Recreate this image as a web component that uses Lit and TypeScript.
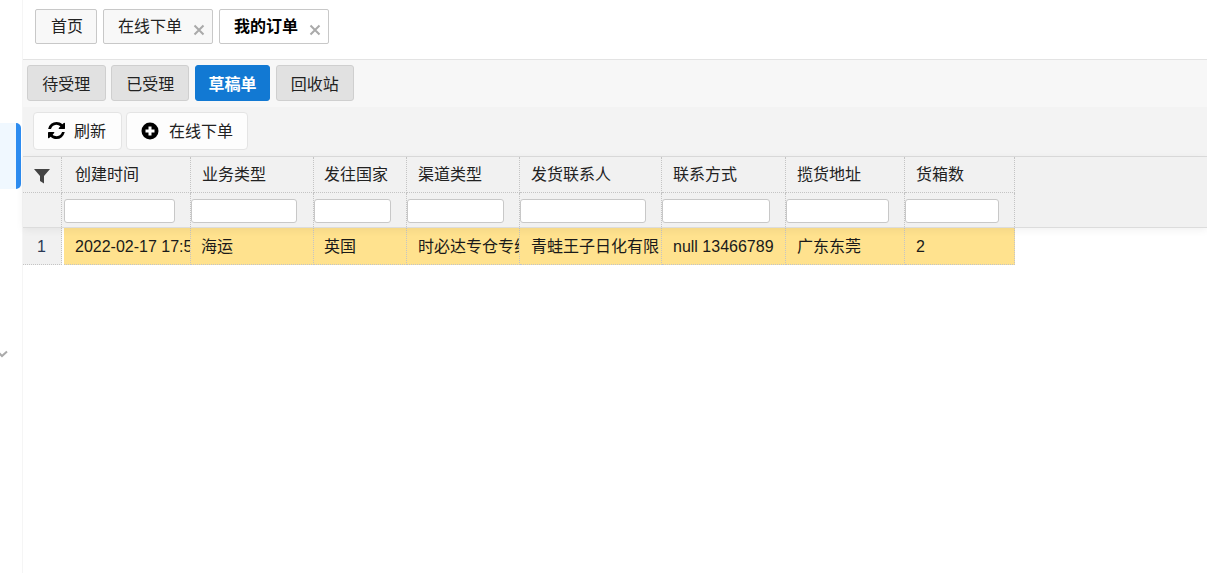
import { LitElement, html, css } from "lit";
import { customElement } from "lit/decorators.js";

const COLS = [
  { t: "创建时间", v: "2022-02-17 17:58", w: 111 },
  { t: "业务类型", v: "海运", w: 106 },
  { t: "发往国家", v: "英国", w: 77 },
  { t: "渠道类型", v: "时必达专仓专线", w: 97 },
  { t: "发货联系人", v: "青蛙王子日化有限", w: 126 },
  { t: "联系方式", v: "null 13466789", w: 108 },
  { t: "揽货地址", v: "广东东莞", w: 103 },
  { t: "货箱数", v: "2", w: 94 },
];

@customElement("app-root")
export class AppRoot extends LitElement {
  static styles = css`
    :host {
      display: block;
      width: 1207px;
      height: 573px;
      overflow: hidden;
      background: #fff;
      color: #111;
      font: 16px/20px "Liberation Sans", "Noto Sans CJK SC", sans-serif;
    }
    .page { display: flex; height: 573px; }
    .side {
      width: 22px;
      flex: none;
      box-sizing: content-box;
      border-right: 1px solid #f5f5f5;
      padding-top: 123px;
    }
    .side-item {
      height: 66px;
      width: 21px;
      box-sizing: border-box;
      background: #f0f8ff;
      border-right: 5px solid #2d8cf0;
      border-radius: 0 5px 5px 0;
    }
    .chev { display: block; margin: 161px 0 0 -3px; }
    .main { flex: 1; min-width: 0; }
    .tabs {
      height: 59px;
      box-sizing: border-box;
      padding: 9px 0 0 12px;
      display: flex;
      gap: 6px;
    }
    .tab {
      height: 35px;
      box-sizing: border-box;
      border: 1px solid #c8c8c8;
      border-radius: 2px;
      background: #f8f8f8;
      display: flex;
      align-items: center;
      padding: 1px 0 0 14px;
      color: #222;
    }
    .tab.home { width: 62px; padding-left: 15px; }
    .tab.closable { width: 110px; }
    .tab.active { background: #fff; font-weight: 700; color: #000; }
    .x { margin: 5px 0 0 11px; flex: none; }
    .sub {
      height: 48px;
      box-sizing: border-box;
      border-top: 1px solid #e3e3e3;
      background: #f7f7f7;
      padding: 5px 0 0 4px;
      display: flex;
      gap: 5.7px;
    }
    .sub-btn {
      height: 36px;
      box-sizing: border-box;
      border: 1px solid #cfcfcf;
      border-radius: 3px;
      background: #e1e1e1;
      display: flex;
      align-items: center;
      justify-content: center;
      padding-top: 3px;
      color: #222;
    }
    .sub-btn.on {
      background: #1279d3;
      border-color: #1279d3;
      color: #fff;
      font-weight: 700;
    }
    .toolbar {
      height: 50px;
      box-sizing: border-box;
      background: #f3f3f3;
      border-bottom: 1px solid #dcdcdc;
      padding: 5px 0 0 10px;
      display: flex;
      gap: 4px;
    }
    .tool {
      height: 38px;
      box-sizing: border-box;
      border: 1px solid #e4e4e4;
      border-radius: 4px;
      background: #fdfdfd;
      display: flex;
      align-items: center;
      padding: 2px 0 0 14px;
      color: #222;
    }
    .tool svg { flex: none; margin: -4px 9px 0 0; }
    .tool svg.plus { margin: -3px 10px 0 0; }
    .head {
      background: #f1f1f1;
      border-bottom: 1px solid #dcdcdc;
      box-shadow: 0 2px 8px rgba(0, 0, 0, 0.06);
      position: relative;
    }
    .row {
      display: grid;
      grid-template-columns: 39px 129px 123px 93px 113px 142px 124px 119px 110px;
    }
    .cell {
      box-sizing: border-box;
      border-right: 1px dotted #c4c4c4;
      padding-left: 11px;
      white-space: nowrap;
      overflow: hidden;
      display: flex;
      align-items: center;
    }
    .titles .cell {
      height: 36px;
      border-bottom: 1px dotted #c4c4c4;
      color: #222;
    }
    .titles .cell:nth-child(2) { padding-left: 13px; }
    .titles .cell:nth-child(4),
    .data .cell:nth-child(3),
    .data .cell:nth-child(4) { padding-left: 10px; }
    .filters .cell { height: 34px; padding: 6px 0 0; align-items: flex-start; }
    .filters .cell:nth-child(2) { padding-left: 2px; }
    .filters input {
      display: block;
      height: 24px;
      box-sizing: border-box;
      border: 1px solid #c8c8c8;
      border-radius: 3px;
      background: #fff;
      padding: 0;
      margin: 0;
      outline: none;
    }
    .icon-cell { justify-content: center; padding: 2px 0 0; }
    .data .cell {
      height: 37px;
      padding-top: 1px;
      background: #ffe28e;
      border-bottom: 1px dotted #c4c4c4;
      color: #1a1a1a;
    }
    .data .cell:nth-child(2) { margin-left: 2px; }
    .data .num {
      background: #f1f1f1;
      padding: 1px 0 0 14px;
      color: #2b3a55;
    }
  `;

  private closeIcon() {
    return html`<svg class="x" width="12" height="12" viewBox="0 0 12 12">
      <path d="M1.5 1.5 10.5 10.5M10.5 1.5 1.5 10.5" stroke="#aaa" stroke-width="2" fill="none" />
    </svg>`;
  }

  render() {
    const sub = [
      ["待受理", 78.7],
      ["已受理", 78],
      ["草稿单", 75, true],
      ["回收站", 78.2],
    ] as [string, number, boolean?][];
    return html`
      <div class="page">
        <aside class="side">
          <div class="side-item"></div>
          <svg class="chev" width="12" height="8" viewBox="0 0 12 8">
            <path d="M1 2 5 6 10 1.500" stroke="#aaa" stroke-width="2" fill="none" />
          </svg>
        </aside>
        <main class="main">
          <nav class="tabs">
            <div class="tab home">首页</div>
            <div class="tab closable">在线下单${this.closeIcon()}</div>
            <div class="tab closable active">我的订单${this.closeIcon()}</div>
          </nav>
          <div class="sub">
            ${sub.map(
              ([t, w, on]) =>
                html`<div class="sub-btn ${on ? "on" : ""}" style="width:${w}px">${t}</div>`
            )}
          </div>
          <div class="toolbar">
            <div class="tool" style="width:89px">
              <svg width="17" height="17" viewBox="0 0 1536 1536">
                <path
                  fill="#000"
                  d="M1511 928q0 5-1 7-64 268-268 434.500T764 1536q-146 0-282.500-55T238 1324l-129 129q-19 19-45 19t-45-19-19-45V960q0-26 19-45t45-19h448q26 0 45 19t19 45-19 45l-137 137q71 66 161 102t187 36q134 0 250-65t186-179q11-17 53-117 8-23 30-23h192q13 0 22.500 9.500t9.500 22.500zm25-800v448q0 26-19 45t-45 19h-448q-26 0-45-19t-19-45 19-45l138-138q-148-137-349-137-134 0-250 65T332 500q-11 17-53 117-8 23-30 23H50q-13 0-22.500-9.500T18 608v-7q65-268 270-434.500T768 0q146 0 284 55.500T1297 212l130-129q19-19 45-19t45 19 19 45z"
                />
              </svg>
              刷新
            </div>
            <div class="tool" style="width:122px">
              <svg class="plus" width="18" height="18" viewBox="0 0 18 18">
                <circle cx="9" cy="9" r="8.500" fill="#000" />
                <path d="M9 4.500V13.500M4.500 9H13.500" stroke="#fff" stroke-width="3" fill="none" />
              </svg>
              在线下单
            </div>
          </div>
          <div class="head">
            <div class="row titles">
              <div class="cell icon-cell">
                <svg width="16" height="16" viewBox="0 0 16 16">
                  <path d="M0 1H16L10 8V15.500L6 13V8Z" fill="#444" />
                </svg>
              </div>
              ${COLS.map((c) => html`<div class="cell">${c.t}</div>`)}
            </div>
            <div class="row filters">
              <div class="cell"></div>
              ${COLS.map(
                (c) => html`<div class="cell"><input style="width:${c.w}px" /></div>`
              )}
            </div>
          </div>
          <div class="row data">
            <div class="cell num">1</div>
            ${COLS.map((c) => html`<div class="cell">${c.v}</div>`)}
          </div>
        </main>
      </div>
    `;
  }
}
